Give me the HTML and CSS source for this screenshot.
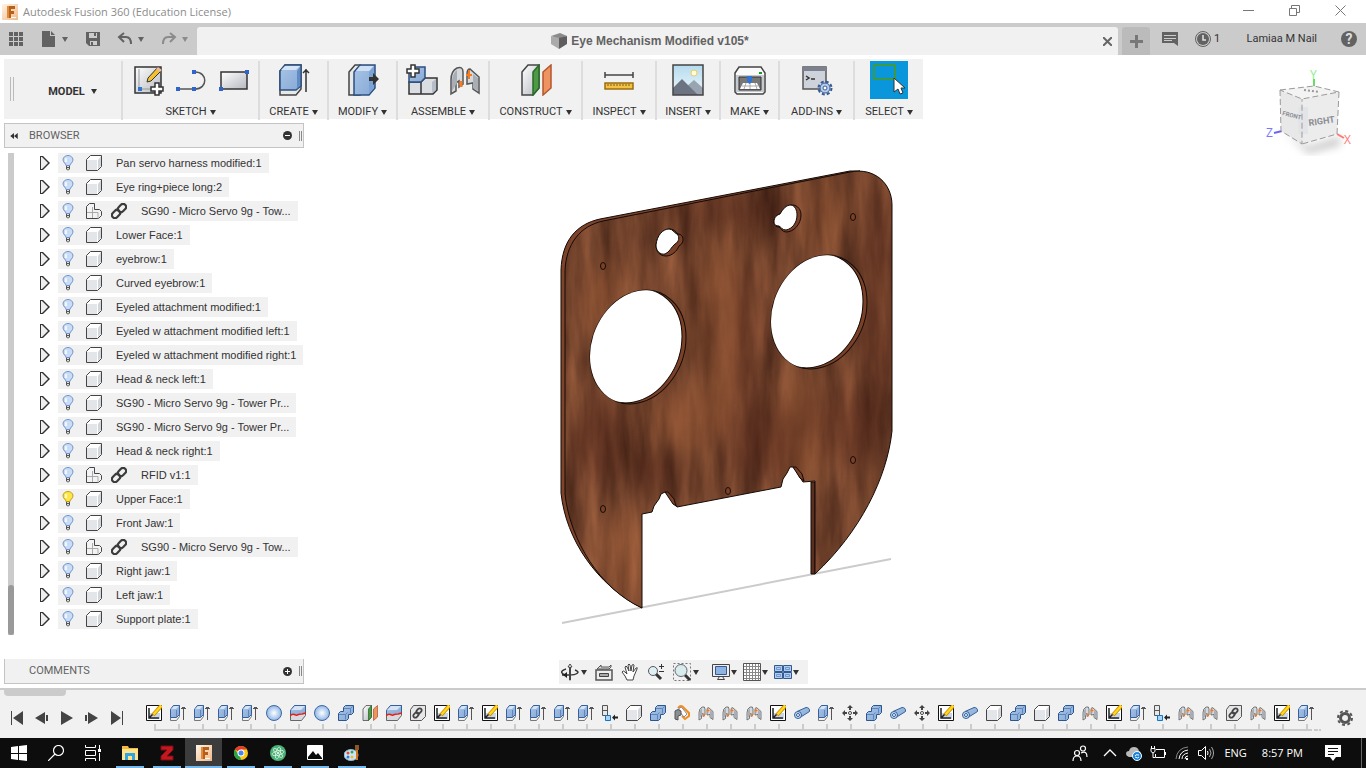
FILE: index.html
```html
<!DOCTYPE html>
<html lang="en">
<head>
<meta charset="UTF-8">
<meta name="viewport" content="width=device-width, initial-scale=1">
<title>Autodesk Fusion 360 (Education License)</title>
<link rel="stylesheet" href="styles.css">
</head>
<body>

<!-- Icon sprite -->
<svg class="sprite" aria-hidden="true">
  <defs>
    <linearGradient id="gBlue" x1="0" y1="0" x2="1" y2="1"><stop offset="0" stop-color="#a9c4e6"/><stop offset="1" stop-color="#86a9d6"/></linearGradient>
    <linearGradient id="gGrey" x1="0" y1="0" x2="1" y2="1"><stop offset="0" stop-color="#fff"/><stop offset="1" stop-color="#b4b8bf"/></linearGradient>
    <linearGradient id="gSky" x1="0" y1="0" x2="0" y2="1"><stop offset="0" stop-color="#b5dbee"/><stop offset="1" stop-color="#eef8fc"/></linearGradient>
    <radialGradient id="gBall"><stop offset="0" stop-color="#fff"/><stop offset="1" stop-color="#8fb6e6"/></radialGradient>
    <linearGradient id="gFusion" x1="0" y1="0" x2="1" y2="1"><stop offset="0" stop-color="#fff3e4"/><stop offset="1" stop-color="#f0b98a"/></linearGradient>
  </defs>

  <symbol id="fusion" viewBox="0 0 16 16"><path fill="url(#gFusion)" d="M0 0h16v16H0z"/><path fill="#b8601b" d="M5 2h8v3H9v2h3v3H9v4H5z"/><path fill="#e08b3c" d="M5 2h2v12H5z"/><path fill="#fff" d="M9 13h5v1H9z"/></symbol>
  <symbol id="apps" viewBox="0 0 16 16"><path fill="#626262" d="M1 1h4v4H1zm5 0h4v4H6zm5 0h4v4h-4zM1 6h4v4H1zm5 0h4v4H6zm5 0h4v4h-4zM1 11h4v4H1zm5 0h4v4H6zm5 0h4v4h-4z"/></symbol>
  <symbol id="doc" viewBox="0 0 16 16"><path fill="#626262" d="M1 0h8v5h5v11H1zM10 0l4 4h-4z"/></symbol>
  <symbol id="save" viewBox="0 0 16 16"><path fill="#626262" d="M1 1h14v14H4l-3-3z"/><path fill="#ccc" d="M4 2h8v5H4zM5 10h7v4H5z"/><path fill="#626262" d="M9 2h2v3H9zM6 11h2v4H6z"/></symbol>
  <symbol id="undo" viewBox="0 0 16 16"><path fill="none" stroke="currentColor" stroke-width="2" d="M7 2L2 6l5 5M2 6h7q5 0 5 7"/></symbol>
  <symbol id="redo" viewBox="0 0 16 16"><path fill="none" stroke="currentColor" stroke-width="2" d="M9 2l5 4-5 5M14 6H7q-5 0-5 7"/></symbol>
  <symbol id="cube" viewBox="0 0 16 16"><path fill="#8b8b8b" d="M0 3l9-3 7 3-8 3z"/><path fill="#aaa" d="M0 3l8 2v11l-8-5z"/><path fill="#5e5e5e" d="M8 5l8-2v8l-8 5z"/></symbol>
  <symbol id="note" viewBox="0 0 16 16"><path fill="#626262" d="M0 1h16v14l-4-3H0z"/><path stroke="#ccc" d="M2 4.500h12M2 7.500h12M2 9.500h8"/></symbol>
  <symbol id="clock" viewBox="0 0 16 16"><circle cx="8" cy="8" r="7.500" fill="none" stroke="#626262"/><circle cx="8" cy="8" r="6" fill="#626262"/><path fill="none" stroke="#e4e4e4" stroke-width="1.500" d="M8 4v5h3"/></symbol>

  <symbol id="newsketch" viewBox="0 0 32 32"><path fill="url(#gGrey)" stroke="#333" stroke-width="1.500" d="M3 3h26v26H3z"/><path fill="none" stroke="#999" d="M7 5v20h20"/><path fill="#2e74d2" d="M6 23h4v4H6z"/><path fill="#f6bf2e" stroke="#333" d="M16 14L26 3l4 3-11 11-4 1z"/><path fill="#eab9a1" d="M26 3l4 3-2 2-4-3z"/><path fill="#fff" stroke="#333" stroke-width="1.500" d="M23 19h4v4h4v4h-4v4h-4v-4h-4v-4h4z"/></symbol>
  <symbol id="spline" viewBox="0 0 32 32"><path fill="none" stroke="#555" stroke-width="1.500" d="M3 25h17c13 0 13-17 0-17"/><path fill="#2e64cc" d="M1 23h4v4H1zm16 0h4v4h-4zm0-17h4v4h-4z"/></symbol>
  <symbol id="rect" viewBox="0 0 32 32"><path fill="url(#gGrey)" stroke="#333" stroke-width="1.500" d="M3 8h26v17H3z"/><path fill="#2e64cc" d="M27 6h4v4h-4zM1 23h4v4H1z"/></symbol>
  <symbol id="extrude" viewBox="0 0 32 32"><path fill="#e8e8e8" stroke="#444" stroke-width="1.500" d="M2 7l5-6h16v24l-5 6H2z"/><path fill="url(#gBlue)" stroke="#2c4f80" stroke-width="1.500" d="M2 7l5-6h16v21l-5 4H2z"/><path fill="#d4e3f5" d="M3 6l4-4h15l-4 4z"/><path fill="#5f8cc5" d="M19 7l3-4v18l-3 4z"/><path fill="none" stroke="#333" stroke-width="1.500" d="M28 28V5M25 9l3-3 3 3"/></symbol>
  <symbol id="presspull" viewBox="0 0 32 32"><path fill="#e9e9e9" stroke="#444" stroke-width="1.500" d="M2 8l6-7h5v30H2z"/><path fill="url(#gBlue)" stroke="#2c4f80" stroke-width="1.500" d="M7 8l6-7h15v23l-6 7H7z"/><path fill="#d0e0f4" d="M9 7l4-5h14l-5 5z"/><path fill="#7ba3d6" d="M22 8l5-6v22l-5 6z"/><path fill="#333" d="M22 13h4v-4l6 6-6 6v-4h-4z"/></symbol>
  <symbol id="component" viewBox="0 0 32 32"><path fill="#dadde2" stroke="#333" stroke-width="1.500" d="M3 18h12v12H3zM15 18l4-4h12v12l-4 4H15z"/><path fill="#b7bdc6" d="M26 18l4-3v11l-4 3z"/><path fill="url(#gBlue)" stroke="#2c4f80" stroke-width="1.500" d="M3 18V7l4-4h12v11l-4 4z"/><path fill="#fff" stroke="#333" stroke-width="1.500" d="M5 1h4v4h4v4H9v4H5V9H1V5h4z"/></symbol>
  <symbol id="joint" viewBox="0 0 32 32"><path fill="#d5d8dc" stroke="#555" stroke-width="1.500" d="M2 16q0-9 6-12 6-2 6 4v12l-4 3v-6l-3 2v8l-5 3z"/><path fill="#a9aeb6" d="M3 16q1-7 5-10v13l-5 8z"/><path fill="#d5d8dc" stroke="#555" stroke-width="1.500" d="M18 10q0-5 3-5l9 8v16l-6-4v-6l-6 1z"/><path fill="#a9aeb6" d="M24 10l5 4v13l-5-3z"/><path stroke="#f47b20" stroke-width="3" d="M12 17v6"/><path stroke="#f47b20" stroke-width="2" d="M20 6v9M17 11h6"/></symbol>
  <symbol id="plane" viewBox="0 0 32 32"><path fill="url(#gGrey)" stroke="#444" stroke-width="1.500" d="M2 8l6-7h11v23l-6 7H2z"/><path fill="#4c9a46" stroke="#2b6a28" stroke-width="1.500" d="M13 8l6-7v23l-6 7z"/><path fill="#ee9461" stroke="#b4562c" stroke-width="1.500" d="M23 8l8-7v23l-8 7z"/></symbol>
  <symbol id="measure" viewBox="0 0 32 32"><path stroke="#444" stroke-width="1.500" d="M2 11h28M2 8v6M30 8v6"/><path fill="#f2c245" stroke="#9b6c10" stroke-width="1.500" d="M2 19h28v6H2z"/><path stroke="#7d5a12" d="M5 20v2m3-2v2m3-2v2m3-2v2m3-2v2m3-2v2m3-2v2m3-2v2"/></symbol>
  <symbol id="insert" viewBox="0 0 32 32"><path fill="url(#gSky)" d="M1 1h30v30H1z"/><circle cx="22" cy="9" r="3" fill="#fffbe0" stroke="#f1ce5a"/><path fill="#9aa3b0" d="M14 23l8-7 9 8v7H14z"/><path fill="#6c7483" d="M1 24l9-9 16 16H1z"/><path fill="none" stroke="#444" stroke-width="1.500" d="M1 1h30v30H1z"/></symbol>
  <symbol id="print" viewBox="0 0 32 32"><path fill="#fafafa" stroke="#444" stroke-width="1.500" d="M1 9l4-6h22l4 6v19l-2 2H3l-2-2z"/><path fill="#c6c9ce" d="M2 11h28v17H2z"/><path fill="#777" stroke="#333" d="M5 13h22v13H5z"/><path fill="#fff" d="M9 19h14l3 6H6z"/><path fill="#2f75d6" d="M13 12h5v5l-2 3h-1l-2-3z"/><path fill="#169b20" d="M25 8h3v2h-3z"/><path stroke="#aaa" d="M8 22h16M12 19l-2 6m6-6v6m5-6l2 6"/></symbol>
  <symbol id="addins" viewBox="0 0 32 32"><path fill="#cdd2db" stroke="#555" stroke-width="1.500" d="M2 3h23v22H2z"/><path fill="#7b8190" d="M2 3h23v4H2z"/><path fill="none" stroke="#333" stroke-width="1.500" d="M5 12l3 2-3 2M10 15h4"/><circle cx="24" cy="24" r="6.500" fill="none" stroke="#385a92" stroke-width="2" stroke-dasharray="3 2.100"/><circle cx="24" cy="24" r="5" fill="#b5ccee" stroke="#385a92"/><circle cx="24" cy="24" r="2" fill="#fff" stroke="#385a92"/></symbol>
  <symbol id="select" viewBox="0 0 38 38"><path fill="#0a96db" d="M0 0h38v38H0z"/><path fill="none" stroke="#4f9c13" stroke-width="1.500" d="M4 4h21v14H4z"/><path fill="#fff" stroke="#333" d="M24 17v14l4-3 2 5 3-1-2-5h4z"/></symbol>

  <symbol id="bulb" viewBox="0 0 16 16"><path fill="#ddd" stroke="#555" d="M6.500 10.500h3v3.500l-1 1h-1l-1-1zM6.500 12.500h3"/><path d="M6 10.500Q6 9 4.500 8C1 4 4.500.500 8 .500S15 4 11.500 8Q10 9 10 10.500z"/><path fill="#fff" stroke="none" opacity=".7" d="M5 3h2v4H5z"/></symbol>
  <symbol id="body" viewBox="0 0 16 16"><path fill="#fff" stroke="#444" d="M.5 4.500l4-4h11v11l-4 4H.5z"/><path fill="#e3e5e9" d="M1 5h10v10H1z"/><path fill="#d2d5da" d="M12 5l3-4v10l-3 3z"/></symbol>
  <symbol id="bodies" viewBox="0 0 16 16"><path fill="#f3f3f5" stroke="#444" d="M.5 3.500l3-3h5v6h5l2 2v4l-3 3H.5z"/><path fill="none" stroke="#aaa" d="M6.500 4v11M1 9.500h11v6"/></symbol>
  <symbol id="link" viewBox="0 0 16 16"><g fill="none" stroke="#3c3c3c" stroke-width="2.200"><rect x="-4.500" y="-3" width="9" height="6" rx="3" transform="translate(11 5) rotate(-45)"/><rect x="-4.500" y="-3" width="9" height="6" rx="3" transform="translate(5 11) rotate(-45)"/></g></symbol>

  <symbol id="t-sketch" viewBox="0 0 16 16"><path fill="#fff" stroke="#111" d="M.5.5h15v15H.5z"/><path fill="#c9d6ea" d="M3 8h11v6H3z"/><path fill="none" stroke="#222" stroke-width="1.500" d="M3 3v10h10M3 13l6-6"/><path stroke="#c88a00" stroke-width="4" d="M7 10l8-9"/><path stroke="#ffd71c" stroke-width="2.500" d="M7.500 9.500l8-9"/></symbol>
  <symbol id="t-ext" viewBox="0 0 16 16"><path fill="#f1f1f1" stroke="#777" d="M.5 4.500l3-4h6v11l-3 4h-6z"/><path fill="url(#gBlue)" stroke="#34609b" d="M.5 4.500l3-4h6v9l-3 3h-6z"/><path fill="#d4e3f5" d="M1 4l3-3h5L6 4z"/><path fill="none" stroke="#5c86bd" d="M6.500 12V5"/><path fill="none" stroke="#555" d="M13.500 15V2M11 3.500h5M12 2.500h3"/></symbol>
  <symbol id="t-ball" viewBox="0 0 16 16"><circle cx="8" cy="8" r="7.500" fill="url(#gBall)" stroke="#3d68a5"/></symbol>
  <symbol id="t-split" viewBox="0 0 16 16"><path fill="#d7dade" stroke="#666" d="M.5 5.500l4-5h11v10l-4 5H.5z"/><path fill="url(#gBlue)" stroke="#34609b" d="M.5 10V5.500l4-5h11V8"/><path fill="#d4e3f5" d="M1 5l4-4h10l-4 4z"/><path fill="none" stroke="#e32214" stroke-width="1.500" d="M0 11c4-4 5 0 7-1s4-1 5-1l4-1"/></symbol>
  <symbol id="t-comb" viewBox="0 0 16 16"><path fill="url(#gBlue)" stroke="#2b5591" d="M.5 8.500l2-2h3v-4l2-2h8v7l-2 2h-3v4l-2 2h-8z"/><path fill="none" stroke="#5c86bd" d="M6 3.500h6.500v5M1 9.500h6.500v5M12.500 3.500l2-2M7.500 9.500l2-2"/></symbol>
  <symbol id="t-link" viewBox="0 0 16 16"><path fill="#e6e6e8" stroke="#555" d="M.5 4.500l3-4h12v11l-4 4H.5z"/><g fill="none" stroke="#444" stroke-width="1.800"><rect x="-3" y="-2" width="6" height="4" rx="2" transform="translate(9 6) rotate(-45)"/><rect x="-3" y="-2" width="6" height="4" rx="2" transform="translate(6 10) rotate(-45)"/></g></symbol>
  <symbol id="t-comp" viewBox="0 0 16 16"><path fill="#e8e8e8" stroke="#555" d="M.5.5h5v10h-5zM.5 5.500h5"/><path fill="#a9d4f5" stroke="#1276c8" d="M3.500 10.500h5v5h-5z"/><path fill="#222" d="M10 12.500l3-3v2h3v2h-3v2z"/></symbol>
  <symbol id="t-asbuilt" viewBox="0 0 16 16"><path fill="none" stroke="#f28c1e" stroke-width="2" d="M4 3q3-4 6 0l5 5v3l-4 3-3-3"/><path fill="#fff" stroke="#888" d="M5 3q3-2 4 1l4 5-3 3-5-6z"/><path fill="#8b8f94" stroke="#555" d="M1 6q3-3 6 0v4l-3 1v4l-3-1z"/></symbol>
  <symbol id="t-pipe" viewBox="0 0 16 16"><path fill="url(#gBlue)" stroke="#34609b" d="M3 6.500l9-4q4 0 3.500 4L6 12.500"/><circle cx="4" cy="10" r="3.500" fill="#c9dcf2" stroke="#34609b"/><circle cx="4" cy="10" r="1.500" fill="#fff" stroke="#34609b"/></symbol>
  <symbol id="t-move" viewBox="0 0 16 16"><path fill="#444" d="M8 0l3 3H9v2H7V3H5zM8 16l-3-3h2v-2h2v2h2zM0 8l3-3v2h2v2H3v2zM16 8l-3 3V9h-2V7h2V5z"/><circle cx="8" cy="8" r="1.500" fill="#fff" stroke="#444"/></symbol>

  <symbol id="orbit" viewBox="0 0 18 18"><path fill="none" stroke="#333" stroke-width="1.500" d="M5 6C-2 8 0 12 8 12s12-3 6-5M1 12h5"/><path fill="#fff" stroke="#444" d="M8.500 17V4H7l2-3 2 3H9.500v13z"/><path fill="#222" d="M2 12l4-3v6z"/></symbol>
  <symbol id="lookat" viewBox="0 0 18 18"><path fill="#eee" stroke="#555" stroke-width="1.500" d="M1 7h16v10H1z"/><path fill="#aaa" stroke="#444" d="M4.500 10.500h9v3h-9z"/><path fill="#ddd" stroke="#555" d="M2 6l4-4v2h8l2-2v2l-2 2z"/></symbol>
  <symbol id="hand" viewBox="0 0 18 18"><path fill="#fff" stroke="#444" d="M6 17l-2-4-3-4q1-2 3 0l2 2L4 4q1-2 2 0l2 4-1-6q1-2 2 0l1 6 1-6q2-1 2 0l-1 7 3-4q2-1 1 1l-3 7-1 4z"/></symbol>
  <symbol id="zoomin" viewBox="0 0 18 18"><path stroke="#333" stroke-width="3" d="M9 11l5 5"/><circle cx="6" cy="8" r="4.500" fill="#dff0f2" stroke="#556"/><path stroke="#333" d="M12 3.500h5M14.500 1v5M12 8.500h5"/></symbol>
  <symbol id="zoomfit" viewBox="0 0 18 18"><path fill="none" stroke="#777" stroke-dasharray="2 2" d="M.5.500h17v17H.5z"/><path stroke="#333" stroke-width="3" d="M12 12l5 5"/><circle cx="8" cy="7.500" r="6" fill="#d8ecec" stroke="#667"/></symbol>
  <symbol id="display" viewBox="0 0 18 18"><path fill="#eee" stroke="#444" d="M.5 1.500h17v12H.5zM5.500 16.500l2-3h3l2 3z"/><path fill="#8eb4e3" stroke="#35588f" d="M3.500 3.500h11v8h-11z"/></symbol>
  <symbol id="gridset" viewBox="0 0 18 18"><path fill="#fff" stroke="#555" d="M.5.500h17v17H.5z"/><path stroke="#888" d="M3.500 1v16m3-16v16m3-16v16m3-16v16m3-16v16M1 3.500h16m-16 3h16m-16 3h16m-16 3h16m-16 3h16"/></symbol>
  <symbol id="views" viewBox="0 0 18 18"><path fill="#aecdf0" stroke="#35588f" d="M.5 2.500h8v6h-8zm9 0h8v6h-8zm-9 7h8v6h-8zm9 0h8v6h-8z"/><path fill="none" stroke="#6f97ca" d="M2.500 4.500h4v2h-4zm9 0h4v2h-4zm-9 7h4v2h-4zm9 0h4v2h-4z"/></symbol>

  <symbol id="gear" viewBox="0 0 16 16"><circle cx="8" cy="8" r="4.500" fill="none" stroke="#555" stroke-width="3"/><circle cx="8" cy="8" r="7" fill="none" stroke="#555" stroke-width="2" stroke-dasharray="3 2.500"/></symbol>
  <symbol id="first" viewBox="0 0 16 16"><path fill="#444" d="M2 1h1v14H2zM14 1v14L4 8z"/></symbol>
  <symbol id="back" viewBox="0 0 16 16"><path fill="#444" d="M11 2v12L1 8zM12 5h2v6h-2z"/></symbol>
  <symbol id="play" viewBox="0 0 16 16"><path fill="#444" d="M2 1l12 7-12 7z"/></symbol>
  <symbol id="fwd" viewBox="0 0 16 16"><path fill="#444" d="M4 2v12l10-6zM1 5h2v6H1z"/></symbol>
  <symbol id="last" viewBox="0 0 16 16"><path fill="#444" d="M13 1h1v14h-1zM2 1v14l10-7z"/></symbol>

  <symbol id="win" viewBox="0 0 16 16"><path fill="#fff" d="M0 2l7-1v7H0zM8 1l8-1v8H8zM0 9h7v6l-7-1zM8 9h8v7l-8-1z"/></symbol>
  <symbol id="search" viewBox="0 0 16 16"><circle cx="10.500" cy="5.500" r="5" fill="none" stroke="#fff" stroke-width="1.200"/><path stroke="#fff" stroke-width="1.200" d="M7 9l-7 7"/></symbol>
  <symbol id="taskview" viewBox="0 0 16 16"><path fill="none" stroke="#fff" d="M.5 0v2.500h10V0M.5 5.500h10v5H.5zM.5 16v-2.500h10V16M14.500 0v4m0 4v8"/><path fill="#fff" d="M13 4h3v3h-3z"/></symbol>
  <symbol id="folder" viewBox="0 0 16 16"><path fill="#f5b93c" d="M0 1h6l1 2h9v4H0z"/><path fill="#ffe38d" d="M0 4h16v11H0z"/><path fill="#2fa5e4" d="M3 8h10v7h-3v-4H6v4H3z"/></symbol>
  <symbol id="zed" viewBox="0 0 16 16"><path fill="#c41820" stroke="#7c0c12" d="M2 1h12v4l-6 6h6v4H2v-4l6-6H2z"/></symbol>
  <symbol id="chrome" viewBox="0 0 16 16"><circle cx="8" cy="8" r="7" fill="#fbc915"/><path fill="#e33b2e" d="M8 8L1.900 4.500A7 7 0 0 1 14 4.500H8z"/><path fill="#2ca24c" d="M1.900 4.500L6 10l2.500 5A7 7 0 0 1 1.900 4.500z"/><circle cx="8" cy="8" r="3.500" fill="#fff"/><circle cx="8" cy="8" r="2.500" fill="#4586f3"/></symbol>
  <symbol id="atom" viewBox="0 0 16 16"><circle cx="8" cy="8" r="8" fill="#49b176"/><g fill="none" stroke="#dff5e7" stroke-width=".8"><ellipse cx="8" cy="8" rx="6" ry="2.200" transform="rotate(-15 8 8)"/><ellipse cx="8" cy="8" rx="6" ry="2.200" transform="rotate(45 8 8)"/><ellipse cx="8" cy="8" rx="6" ry="2.200" transform="rotate(105 8 8)"/></g><circle cx="8" cy="8" r="1" fill="#fff"/></symbol>
  <symbol id="photos" viewBox="0 0 16 16"><path fill="#0b0b0b" stroke="#fff" d="M.5.500h15v14H.5z"/><path fill="#fff" d="M1 1h14v12l-4-5-2 2-3-4-5 6z"/></symbol>
  <symbol id="paint" viewBox="0 0 16 16"><ellipse cx="7" cy="10" rx="7" ry="5.500" fill="#cfe4f3" stroke="#8db4cf"/><circle cx="4" cy="8" r="1.500" fill="#e34a33"/><circle cx="8" cy="7" r="1.500" fill="#35a853"/><circle cx="4" cy="12" r="1.500" fill="#2f78dc"/><circle cx="8" cy="12" r="1.500" fill="#f0bd28"/><path stroke="#d1751f" stroke-width="2" d="M13 15V4"/><path fill="#8a5527" d="M11 0h4v5h-4z"/></symbol>
  <symbol id="people" viewBox="0 0 16 16"><g fill="none" stroke="#fff" stroke-width="1.200"><circle cx="5" cy="8" r="2.500"/><path d="M1 16q0-5 4-5t4 5"/><circle cx="11" cy="3.500" r="2.500"/><path d="M9 8q6-3 6 4"/></g></symbol>
  <symbol id="chev" viewBox="0 0 16 16"><path fill="none" stroke="#fff" stroke-width="1.300" d="M2 11l6-6 6 6"/></symbol>
  <symbol id="cloud" viewBox="0 0 16 16"><path fill="#b9b9b9" d="M3 12q-3-1-3-3 0-3 3-3 1-4 5-4t5 4q3 1 2 6z"/><circle cx="11" cy="11" r="4.500" fill="#1684dc" stroke="#fff"/><path fill="none" stroke="#fff" d="M9 11q0-2 4-1M13 12q-1 2-4 0"/></symbol>
  <symbol id="battery" viewBox="0 0 16 16"><path fill="none" stroke="#fff" d="M6 4.500h8.500v8H5.500V9M15.500 7v3M1 3.500h4v3q-2 3-4 0zM1.500 1v2m3-2v2M3 8v4.500h2"/></symbol>
  <symbol id="wifi" viewBox="0 0 16 16"><g fill="none" stroke="#fff"><path stroke="#888" d="M2 14Q3 3 14 2"/><path d="M5 14Q6 6 14 5M8 14q0-5 6-6M11 14q0-3 3-3"/></g><path fill="#fff" d="M12 13h2v2h-2z"/></symbol>
  <symbol id="volume" viewBox="0 0 16 16"><path fill="none" stroke="#fff" d="M.5 5.500h3l4-4v13l-4-4h-3zM9.500 6q1 2 0 4"/><path fill="none" stroke="#aaa" d="M11.500 4q3 4 0 8M13.500 2q4 6 0 12"/></symbol>
  <symbol id="action" viewBox="0 0 16 16"><path fill="#fff" d="M0 0h16v12h-5l-3 4-3-4H0z"/><path stroke="#111" d="M3 3.500h10M3 6.500h10M3 9.500h6"/></symbol>
</svg>

<header class="titlebar">
  <svg class="i16"><use href="#fusion"/></svg>
  <h1>Autodesk Fusion 360 (Education License)</h1>
  <div class="window-controls">
    <button type="button" aria-label="Minimize"><svg viewBox="0 0 11 11"><path d="M0 5.500h11"/></svg></button>
    <button type="button" aria-label="Restore"><svg viewBox="0 0 11 11"><path d="M.5 3.500h7v7h-7zM2.500 3V.500h8v7H8"/></svg></button>
    <button type="button" aria-label="Close"><svg viewBox="0 0 11 11"><path d="M.5.500l10 10M10.500.500l-10 10"/></svg></button>
  </div>
</header>

<div class="appbar">
  <div class="quick">
    <button type="button" aria-label="Data panel"><svg class="i16"><use href="#apps"/></svg></button>
    <button type="button" aria-label="File"><svg class="i16"><use href="#doc"/></svg><span class="caret"></span></button>
    <button type="button" aria-label="Save"><svg class="i16"><use href="#save"/></svg></button>
    <button type="button" aria-label="Undo"><svg class="i16"><use href="#undo"/></svg><span class="caret"></span></button>
    <button type="button" aria-label="Redo" class="faded"><svg class="i16"><use href="#redo"/></svg><span class="caret"></span></button>
  </div>
  <div class="doc-tab">
    <span class="doc-name"><svg class="i16"><use href="#cube"/></svg>Eye Mechanism Modified v105*</span>
    <button type="button" class="tab-close" aria-label="Close tab"><svg viewBox="0 0 9 9"><path d="M0 0l9 9M9 0L0 9"/></svg></button>
  </div>
  <button type="button" class="new-tab" aria-label="New design"></button>
  <div class="account">
    <button type="button" aria-label="Comments"><svg class="i16"><use href="#note"/></svg></button>
    <button type="button" class="jobs"><svg class="i16"><use href="#clock"/></svg>1</button>
    <button type="button" class="user">Lamiaa M Nail</button>
    <button type="button" class="help" aria-label="Help">?</button>
  </div>
</div>

<main class="workspace">
  <svg class="scene" viewBox="0 55 1366 633" role="img" aria-label="Upper face plate">
    <defs>
      <filter id="grain" x="0" y="0" width="1" height="1" color-interpolation-filters="sRGB">
        <feTurbulence type="fractalNoise" baseFrequency=".05 .008" numOctaves="4" seed="7"/>
        <feColorMatrix values=".45 0 0 0 .22  .3 0 0 0 .11  .2 0 0 0 .07  0 0 0 0 1"/>
      </filter>
      <filter id="soft" x="-50%" y="-50%" width="200%" height="200%" color-interpolation-filters="sRGB"><feGaussianBlur stdDeviation="12"/></filter>
      <path id="plate" d="M565 494V271C566 244 580 226 603 221L850 172C875 167 892 184 892 205V431C887 478 860 532 815 574V481L803 482L799 476L797 472L793 467H790L787 473L783 479L781 487L677 507L673 502L669 496L665 492L661 494L659 499L654 506L652 512L642 514V608C600 589 570 540 565 494Z"/>
      <clipPath id="plateClip"><use href="#plate"/></clipPath>
      <ellipse id="eye" rx="48" ry="56" transform="matrix(1 -.2 0 1 0 0)"/>
      <clipPath id="eyeClip"><use href="#eye"/></clipPath>
    </defs>
    <path d="M562 623L891 559" stroke="#cbcbcb" stroke-width="2"/>
    <!-- plate side -->
    <path fill="#7d432b" stroke="#140a06" d="M561 493V270C562 240 577 224 600 219L850 171H860L650 230L570 300V490L642 608C597 585 566 540 561 493Z"/>
    <path fill="#5c2e20" stroke="#140a06" d="M811 482h4v92h-4z"/>
    <g clip-path="url(#plateClip)">
      <path fill="#74402a" filter="url(#grain)" d="M555 165h340v445H555z"/>
      <g filter="url(#soft)">
        <g fill="#a8613a" opacity=".4"><ellipse cx="720" cy="330" rx="22" ry="90"/><ellipse cx="605" cy="305" rx="18" ry="40"/><ellipse cx="690" cy="420" rx="40" ry="30"/><ellipse cx="800" cy="430" rx="22" ry="60"/><ellipse cx="625" cy="560" rx="18" ry="50"/><ellipse cx="825" cy="215" rx="16" ry="40"/></g>
        <g fill="#4a1f15" opacity=".4"><ellipse cx="600" cy="440" rx="28" ry="40"/><ellipse cx="745" cy="340" rx="12" ry="70"/><ellipse cx="760" cy="440" rx="36" ry="40"/><ellipse cx="880" cy="300" rx="16" ry="120"/><ellipse cx="730" cy="210" rx="60" ry="14"/><ellipse cx="850" cy="430" rx="32" ry="36"/><ellipse cx="655" cy="470" rx="24" ry="20"/></g>
      </g>
    </g>
    <use href="#plate" fill="none" stroke="#140a06"/>
    <g fill="#7a4128" stroke="#140a06">
      <g transform="translate(638 347)"><use href="#eye"/><g clip-path="url(#eyeClip)"><use href="#eye" x="-4" y="-1" fill="#fff"/></g></g>
      <g transform="translate(819 312)"><use href="#eye"/><g clip-path="url(#eyeClip)"><use href="#eye" x="-4" y="-1" fill="#fff"/></g></g>
      <path d="M656 245c1-10 7-16 14-16 4 0 6 3 8 5 6 0 7 9 1 12-2 5-7 10-13 10-6 0-10-4-10-11z"/>
      <path fill="#fff" d="M656 245c1-10 7-16 13-16 4 0 5 4 8 5 3 3 2 8-2 10-4 3-5 8-10 10-5 1-9-3-9-9z"/>
      <path d="M774 222c0-5 3-7 6-8 3-5 7-9 12-9 6 0 9 5 9 10 0 9-7 17-15 17-4 0-5-4-7-5-3 0-5-2-5-5z"/>
      <path fill="#fff" d="M774 222c0-5 3-7 6-8 3-5 6-9 11-9 4 1 6 5 6 10 0 8-5 14-11 15-4 0-5-3-7-4-3 0-5-1-5-4z"/>
      <ellipse cx="603" cy="266" rx="2.500" ry="3.500"/><ellipse cx="853" cy="217" rx="2.500" ry="3.500"/><ellipse cx="853" cy="460" rx="2.500" ry="3.500"/><ellipse cx="603" cy="509" rx="2.500" ry="3.500"/><ellipse cx="728" cy="491" rx="2.500" ry="3.500"/>
      <path d="M665 492h3l6 7 2 7-3-2zM793 467h3l6 7 2 7-4-3z"/>
    </g>
  </svg>

  <svg class="viewcube" viewBox="0 0 96 96" role="img" aria-label="View cube">
    <defs><filter id="shade"><feGaussianBlur stdDeviation="4"/></filter></defs>
    <path fill="#999" opacity=".6" filter="url(#shade)" d="M22 66l24 16 32-10v8L46 88z"/>
    <path stroke="#6d6" stroke-width="2" d="M52 14v8"/>
    <path stroke="#66f" stroke-width="2" d="M12 68l8-2"/>
    <path stroke="#f77" stroke-width="2" d="M75 69l7 4"/>
    <path fill="#f3f3f3" d="M18 25l34-4 25 6-37 7z"/>
    <path fill="#e8e8e9" d="M18 25l22 9v45L19 66z"/>
    <path fill="#ececed" d="M40 34l37-7-2 42-35 10z"/>
    <path fill="#e2e4e7" d="M36 42l10 0v27h-10z"/>
    <path fill="none" stroke="#9a9a9a" stroke-dasharray="6 3" d="M18 25l34-4 25 6-37 7zM18 25l1 41 21 13V34M77 27l-2 42-35 10"/>
    <path stroke="#999" stroke-width="2" stroke-dasharray="2 2" d="M42 25l15 2"/>
    <text class="axis" x="48" y="14" fill="#8e8">Y</text>
    <text class="axis" x="4" y="72" fill="#77f">Z</text>
    <text class="axis" x="82" y="79" fill="#f77">X</text>
    <text class="face" x="47" y="61" transform="rotate(-8 47 61)">RIGHT</text>
    <text class="face small" x="20" y="50" transform="rotate(14 20 50)">FRONT</text>
  </svg>

  <div class="ribbon">
    <div class="grip"></div>
    <button type="button" class="mode">MODEL<span class="caret"></span></button>
    <div class="group"><div class="icons"><svg><use href="#newsketch"/></svg><svg><use href="#spline"/></svg><svg><use href="#rect"/></svg></div><button type="button">SKETCH<span class="caret"></span></button></div>
    <div class="group"><div class="icons"><svg><use href="#extrude"/></svg></div><button type="button">CREATE<span class="caret"></span></button></div>
    <div class="group"><div class="icons"><svg><use href="#presspull"/></svg></div><button type="button">MODIFY<span class="caret"></span></button></div>
    <div class="group"><div class="icons"><svg><use href="#component"/></svg><svg><use href="#joint"/></svg></div><button type="button">ASSEMBLE<span class="caret"></span></button></div>
    <div class="group"><div class="icons"><svg><use href="#plane"/></svg></div><button type="button">CONSTRUCT<span class="caret"></span></button></div>
    <div class="group"><div class="icons"><svg><use href="#measure"/></svg></div><button type="button">INSPECT<span class="caret"></span></button></div>
    <div class="group"><div class="icons"><svg><use href="#insert"/></svg></div><button type="button">INSERT<span class="caret"></span></button></div>
    <div class="group"><div class="icons"><svg><use href="#print"/></svg></div><button type="button">MAKE<span class="caret"></span></button></div>
    <div class="group"><div class="icons"><svg><use href="#addins"/></svg></div><button type="button">ADD-INS<span class="caret"></span></button></div>
    <div class="group"><div class="icons"><svg class="active"><use href="#select"/></svg></div><button type="button">SELECT<span class="caret"></span></button></div>
  </div>

  <div class="panel browser-head">
    <svg class="collapse" viewBox="0 0 10 8"><path d="M5 0v8L0 4zM10 0v8L5 4z"/></svg>
    <h2>BROWSER</h2>
    <button type="button" class="dot" aria-label="Collapse browser"></button>
    <span class="handle"></span>
  </div>

  <div class="browser">
    <div class="track"><div class="thumb"></div></div>
    <ul class="tree">
      <li><button type="button" class="twist" aria-label="Expand"></button><span class="node"><svg class="i16 bulb"><use href="#bulb"/></svg><svg class="i16"><use href="#body"/></svg><span class="name">Pan servo harness modified:1</span></span></li>
      <li><button type="button" class="twist" aria-label="Expand"></button><span class="node"><svg class="i16 bulb"><use href="#bulb"/></svg><svg class="i16"><use href="#body"/></svg><span class="name">Eye ring+piece long:2</span></span></li>
      <li><button type="button" class="twist" aria-label="Expand"></button><span class="node"><svg class="i16 bulb"><use href="#bulb"/></svg><svg class="i16"><use href="#bodies"/></svg><svg class="i16 chain"><use href="#link"/></svg><span class="name">SG90 - Micro Servo 9g - Tow...</span></span></li>
      <li><button type="button" class="twist" aria-label="Expand"></button><span class="node"><svg class="i16 bulb"><use href="#bulb"/></svg><svg class="i16"><use href="#body"/></svg><span class="name">Lower Face:1</span></span></li>
      <li><button type="button" class="twist" aria-label="Expand"></button><span class="node"><svg class="i16 bulb"><use href="#bulb"/></svg><svg class="i16"><use href="#body"/></svg><span class="name">eyebrow:1</span></span></li>
      <li><button type="button" class="twist" aria-label="Expand"></button><span class="node"><svg class="i16 bulb"><use href="#bulb"/></svg><svg class="i16"><use href="#body"/></svg><span class="name">Curved eyebrow:1</span></span></li>
      <li><button type="button" class="twist" aria-label="Expand"></button><span class="node"><svg class="i16 bulb"><use href="#bulb"/></svg><svg class="i16"><use href="#body"/></svg><span class="name">Eyeled attachment modified:1</span></span></li>
      <li><button type="button" class="twist" aria-label="Expand"></button><span class="node"><svg class="i16 bulb"><use href="#bulb"/></svg><svg class="i16"><use href="#body"/></svg><span class="name">Eyeled w attachment modified left:1</span></span></li>
      <li><button type="button" class="twist" aria-label="Expand"></button><span class="node"><svg class="i16 bulb"><use href="#bulb"/></svg><svg class="i16"><use href="#body"/></svg><span class="name">Eyeled w attachment modified right:1</span></span></li>
      <li><button type="button" class="twist" aria-label="Expand"></button><span class="node"><svg class="i16 bulb"><use href="#bulb"/></svg><svg class="i16"><use href="#body"/></svg><span class="name">Head &amp; neck left:1</span></span></li>
      <li><button type="button" class="twist" aria-label="Expand"></button><span class="node"><svg class="i16 bulb"><use href="#bulb"/></svg><svg class="i16"><use href="#body"/></svg><span class="name">SG90 - Micro Servo 9g - Tower Pr...</span></span></li>
      <li><button type="button" class="twist" aria-label="Expand"></button><span class="node"><svg class="i16 bulb"><use href="#bulb"/></svg><svg class="i16"><use href="#body"/></svg><span class="name">SG90 - Micro Servo 9g - Tower Pr...</span></span></li>
      <li><button type="button" class="twist" aria-label="Expand"></button><span class="node"><svg class="i16 bulb"><use href="#bulb"/></svg><svg class="i16"><use href="#body"/></svg><span class="name">Head &amp; neck right:1</span></span></li>
      <li><button type="button" class="twist" aria-label="Expand"></button><span class="node"><svg class="i16 bulb"><use href="#bulb"/></svg><svg class="i16"><use href="#bodies"/></svg><svg class="i16 chain"><use href="#link"/></svg><span class="name">RFID v1:1</span></span></li>
      <li><button type="button" class="twist" aria-label="Expand"></button><span class="node"><svg class="i16 bulb on"><use href="#bulb"/></svg><svg class="i16"><use href="#body"/></svg><span class="name">Upper Face:1</span></span></li>
      <li><button type="button" class="twist" aria-label="Expand"></button><span class="node"><svg class="i16 bulb"><use href="#bulb"/></svg><svg class="i16"><use href="#body"/></svg><span class="name">Front Jaw:1</span></span></li>
      <li><button type="button" class="twist" aria-label="Expand"></button><span class="node"><svg class="i16 bulb"><use href="#bulb"/></svg><svg class="i16"><use href="#bodies"/></svg><svg class="i16 chain"><use href="#link"/></svg><span class="name">SG90 - Micro Servo 9g - Tow...</span></span></li>
      <li><button type="button" class="twist" aria-label="Expand"></button><span class="node"><svg class="i16 bulb"><use href="#bulb"/></svg><svg class="i16"><use href="#body"/></svg><span class="name">Right jaw:1</span></span></li>
      <li><button type="button" class="twist" aria-label="Expand"></button><span class="node"><svg class="i16 bulb"><use href="#bulb"/></svg><svg class="i16"><use href="#body"/></svg><span class="name">Left jaw:1</span></span></li>
      <li><button type="button" class="twist" aria-label="Expand"></button><span class="node"><svg class="i16 bulb"><use href="#bulb"/></svg><svg class="i16"><use href="#body"/></svg><span class="name">Support plate:1</span></span></li>
    </ul>
  </div>

  <div class="bottom">
    <div class="panel comments">
      <h2>COMMENTS</h2>
      <button type="button" class="dot plus" aria-label="Expand comments"></button>
      <span class="handle"></span>
    </div>
    <div class="navbar">
      <div class="nav-set">
        <button type="button" aria-label="Orbit"><svg><use href="#orbit"/></svg><span class="caret"></span></button>
        <button type="button" aria-label="Look at"><svg><use href="#lookat"/></svg></button>
        <button type="button" aria-label="Pan"><svg><use href="#hand"/></svg></button>
        <button type="button" aria-label="Zoom"><svg><use href="#zoomin"/></svg></button>
        <button type="button" aria-label="Fit"><svg><use href="#zoomfit"/></svg><span class="caret"></span></button>
      </div>
      <div class="nav-set tight">
        <button type="button" aria-label="Display settings"><svg><use href="#display"/></svg><span class="caret"></span></button>
        <button type="button" aria-label="Grid and snaps"><svg><use href="#gridset"/></svg><span class="caret"></span></button>
        <button type="button" aria-label="Viewports"><svg><use href="#views"/></svg><span class="caret"></span></button>
      </div>
    </div>
  </div>
</main>

<section class="timeline" aria-label="Timeline">
  <div class="timeline-scroll"></div>
  <div class="timeline-row">
    <div class="transport">
      <button type="button" aria-label="Go to start"><svg class="i16"><use href="#first"/></svg></button>
      <button type="button" aria-label="Step back"><svg class="i16"><use href="#back"/></svg></button>
      <button type="button" aria-label="Play"><svg class="i16"><use href="#play"/></svg></button>
      <button type="button" aria-label="Step forward"><svg class="i16"><use href="#fwd"/></svg></button>
      <button type="button" aria-label="Go to end"><svg class="i16"><use href="#last"/></svg></button>
    </div>
    <ol class="history">
      <li><svg class="i16"><use href="#t-sketch"/></svg></li>
      <li><svg class="i16"><use href="#t-ext"/></svg></li>
      <li><svg class="i16"><use href="#t-ext"/></svg></li>
      <li><svg class="i16"><use href="#t-ext"/></svg></li>
      <li><svg class="i16"><use href="#t-ext"/></svg></li>
      <li><svg class="i16"><use href="#t-ball"/></svg></li>
      <li><svg class="i16"><use href="#t-split"/></svg></li>
      <li><svg class="i16"><use href="#t-ball"/></svg></li>
      <li><svg class="i16"><use href="#t-comb"/></svg></li>
      <li><svg class="i16"><use href="#plane"/></svg></li>
      <li><svg class="i16"><use href="#t-split"/></svg></li>
      <li><svg class="i16"><use href="#t-link"/></svg></li>
      <li><svg class="i16"><use href="#t-sketch"/></svg></li>
      <li><svg class="i16"><use href="#t-ext"/></svg></li>
      <li><svg class="i16"><use href="#t-sketch"/></svg></li>
      <li><svg class="i16"><use href="#t-ext"/></svg></li>
      <li><svg class="i16"><use href="#t-ext"/></svg></li>
      <li><svg class="i16"><use href="#t-ext"/></svg></li>
      <li><svg class="i16"><use href="#t-ext"/></svg></li>
      <li><svg class="i16"><use href="#t-comp"/></svg></li>
      <li><svg class="i16"><use href="#body"/></svg></li>
      <li><svg class="i16"><use href="#t-comb"/></svg></li>
      <li><svg class="i16"><use href="#t-asbuilt"/></svg></li>
      <li><svg class="i16"><use href="#joint"/></svg></li>
      <li><svg class="i16"><use href="#joint"/></svg></li>
      <li><svg class="i16"><use href="#joint"/></svg></li>
      <li><svg class="i16"><use href="#t-sketch"/></svg></li>
      <li><svg class="i16"><use href="#t-pipe"/></svg></li>
      <li><svg class="i16"><use href="#t-ext"/></svg></li>
      <li><svg class="i16"><use href="#t-move"/></svg></li>
      <li><svg class="i16"><use href="#t-comb"/></svg></li>
      <li><svg class="i16"><use href="#t-pipe"/></svg></li>
      <li><svg class="i16"><use href="#t-move"/></svg></li>
      <li><svg class="i16"><use href="#t-sketch"/></svg></li>
      <li><svg class="i16"><use href="#t-pipe"/></svg></li>
      <li><svg class="i16"><use href="#body"/></svg></li>
      <li><svg class="i16"><use href="#t-comb"/></svg></li>
      <li><svg class="i16"><use href="#body"/></svg></li>
      <li><svg class="i16"><use href="#t-comb"/></svg></li>
      <li><svg class="i16"><use href="#joint"/></svg></li>
      <li><svg class="i16"><use href="#t-sketch"/></svg></li>
      <li><svg class="i16"><use href="#t-ext"/></svg></li>
      <li><svg class="i16"><use href="#t-comp"/></svg></li>
      <li><svg class="i16"><use href="#joint"/></svg></li>
      <li><svg class="i16"><use href="#joint"/></svg></li>
      <li><svg class="i16"><use href="#t-link"/></svg></li>
      <li><svg class="i16"><use href="#joint"/></svg></li>
      <li><svg class="i16"><use href="#t-sketch"/></svg></li>
      <li><svg class="i16"><use href="#t-ext"/></svg></li>
    </ol>
    <button type="button" class="timeline-gear" aria-label="Timeline settings"><svg class="i16"><use href="#gear"/></svg></button>
  </div>
</section>

<footer class="taskbar">
  <div class="tasks">
    <button type="button" aria-label="Start"><svg class="i16"><use href="#win"/></svg></button>
    <button type="button" aria-label="Search"><svg class="i16"><use href="#search"/></svg></button>
    <button type="button" aria-label="Task view"><svg class="i16"><use href="#taskview"/></svg></button>
    <button type="button" class="open" aria-label="File Explorer"><svg class="i16"><use href="#folder"/></svg></button>
    <button type="button" class="open" aria-label="Zotero"><svg class="i16"><use href="#zed"/></svg></button>
    <button type="button" class="open current" aria-label="Fusion 360"><svg class="i16"><use href="#fusion"/></svg></button>
    <button type="button" class="open" aria-label="Chrome"><svg class="i16"><use href="#chrome"/></svg></button>
    <button type="button" class="open" aria-label="Atom"><svg class="i16"><use href="#atom"/></svg></button>
    <button type="button" class="open" aria-label="Photos"><svg class="i16"><use href="#photos"/></svg></button>
    <button type="button" class="open" aria-label="Paint"><svg class="i16"><use href="#paint"/></svg></button>
  </div>
  <div class="tray">
    <svg class="i16 people"><use href="#people"/></svg>
    <svg class="i16"><use href="#chev"/></svg>
    <svg class="i16"><use href="#cloud"/></svg>
    <svg class="i16"><use href="#battery"/></svg>
    <svg class="i16"><use href="#wifi"/></svg>
    <svg class="i16"><use href="#volume"/></svg>
    <span>ENG</span>
    <time class="time">8:57 PM</time>
    <svg class="i16 action"><use href="#action"/></svg>
  </div>
</footer>

</body>
</html>
```
FILE: styles.css
```css
* {
  box-sizing: border-box;
}

body {
  margin: 0;
  height: 100vh;
  display: flex;
  flex-direction: column;
  overflow: hidden;
  background: #fff;
  color: #333;
  font-family: Roboto, Arial, sans-serif;
  font-size: 11px;
  line-height: 16px;
}

h1, h2, ul, ol {
  margin: 0;
  padding: 0;
  font-size: inherit;
  font-weight: normal;
  list-style: none;
}

button {
  display: flex;
  align-items: center;
  margin: 0;
  padding: 0;
  border: 0;
  background: none;
  color: inherit;
  font: inherit;
}

svg {
  display: block;
  flex: none;
}

.sprite {
  position: absolute;
  width: 0;
  height: 0;
}

.i16 {
  width: 16px;
  height: 16px;
}

.caret {
  flex: none;
  border: 3px solid transparent;
  border-top: 5px solid #333;
  border-bottom: 0;
}

/* Window title */
.titlebar {
  flex: none;
  display: flex;
  align-items: center;
  height: 23px;
  padding-left: 2px;
  gap: 5px;
  color: #8c8c8c;
  font-family: "Open Sans", "Segoe UI", sans-serif;
}

.window-controls {
  display: flex;
  gap: 35px;
  margin-left: auto;
  padding: 0 20px 3px 0;
}

.window-controls svg {
  width: 11px;
  height: 11px;
  fill: none;
  stroke: #777;
}

/* Document bar */
.appbar {
  flex: none;
  display: flex;
  height: 32px;
  background: #cbcbcb;
}

.quick {
  display: flex;
  align-items: center;
  justify-content: space-between;
  width: 197px;
  padding: 0 9px 0 8px;
  color: #626262;
}

.quick button {
  gap: 5px;
}

.quick .caret {
  border-top-color: #626262;
}

.faded {
  opacity: 0.6;
}

.doc-tab {
  flex: 1;
  display: flex;
  align-items: center;
  margin-top: 4px;
  padding-right: 6px;
  background: #f1f1f1;
  border-radius: 3px 3px 0 0;
}

.doc-name {
  flex: 1;
  display: flex;
  justify-content: center;
  gap: 4px;
  color: #626262;
  font: bold 12px/16px "Liberation Sans", Arial, sans-serif;
}

.tab-close svg {
  width: 9px;
  height: 9px;
  fill: none;
  stroke: #666;
  stroke-width: 2;
}

.new-tab {
  justify-content: center;
  width: 28px;
  margin: 4px 0 0 4px;
  background: #bbb;
  border-radius: 3px 3px 0 0;
}

.new-tab::before {
  content: "";
  width: 13px;
  height: 13px;
  background:
    linear-gradient(#777, #777) center / 13px 3px no-repeat,
    linear-gradient(#777, #777) center / 3px 13px no-repeat;
}

.account {
  display: flex;
  align-items: center;
  width: 216px;
  padding: 0 9px 0 12px;
}

.jobs {
  gap: 3px;
  margin-left: 17px;
}

.user {
  margin: 0 24px 0 auto;
}

.help {
  justify-content: center;
  width: 16px;
  height: 16px;
  border-radius: 50%;
  background: #626262;
  color: #ddd;
  font-size: 14px;
  font-weight: bold;
}

/* Workspace */
.workspace {
  flex: 1;
  min-height: 0;
  display: flex;
  flex-direction: column;
  position: relative;
  padding: 4px;
}

.scene {
  position: absolute;
  top: 0;
  left: 0;
  width: 100%;
  height: 100%;
}

.viewcube {
  position: absolute;
  top: 10px;
  right: 8px;
  width: 96px;
  height: 96px;
}

.axis {
  font: 12px "Open Sans", sans-serif;
}

.face {
  fill: #8a8d92;
  font: bold 9px Roboto, sans-serif;
}

.face.small {
  font-size: 6px;
}

.browser-head,
.browser,
.ribbon,
.bottom {
  position: relative;
}

/* Ribbon */
.ribbon {
  flex: none;
  align-self: flex-start;
  display: grid;
  grid-template-columns: 10px 107px 137px 69px 69px 92px 93px 74px 64px 59px 75px 70px;
  height: 60px;
  background: #f1f1f1;
}

.grip {
  height: 24px;
  margin: 18px 0 0 6px;
  border: solid #bbb;
  border-width: 0 1px;
}

.mode {
  justify-content: center;
  gap: 6px;
  padding: 2px 0 0 10px;
  font-weight: bold;
}

.group {
  display: flex;
  flex-direction: column;
  align-items: center;
  margin: 2px 0;
  border-left: 2px solid #ddd;
}

.group button {
  gap: 3px;
  height: 16px;
  margin-top: 5px;
}

.icons {
  flex: none;
  display: flex;
  align-items: center;
  gap: 11px;
  height: 38px;
}

.icons svg {
  width: 32px;
  height: 32px;
}

.icons .active {
  width: 38px;
  height: 38px;
}

/* Browser and comments panels */
.panel {
  flex: none;
  display: flex;
  align-items: center;
  width: 300px;
  height: 25px;
  padding: 0 1px 0 4px;
  border: 1px solid #c4c4c4;
  background: #f1f1f1;
  color: #626262;
}

.browser-head {
  margin-top: 4px;
}

.collapse {
  width: 10px;
  height: 6px;
  fill: #333;
}

.panel h2 {
  flex: 1;
  margin-left: 10px;
}

.comments {
  border-top: 0;
}

.panel.comments h2 {
  margin-left: 20px;
}

.dot {
  justify-content: center;
  width: 9px;
  height: 9px;
  border-radius: 50%;
  background:
    linear-gradient(#fff, #fff) center / 5px 1px no-repeat,
    #333;
}

.dot.plus {
  background:
    linear-gradient(#fff, #fff) center / 5px 1px no-repeat,
    linear-gradient(#fff, #fff) center / 1px 5px no-repeat,
    #333;
}

.handle {
  width: 3px;
  height: 10px;
  margin-left: 7px;
  border: solid #888;
  border-width: 0 1px;
}

.browser {
  flex: 1;
  min-height: 0;
  display: flex;
  align-items: flex-start;
  padding: 5px 0 0 4px;
}

.track {
  align-self: stretch;
  display: flex;
  align-items: flex-end;
  width: 6px;
  margin-bottom: 24px;
  background: #cbcbcb;
}

.thumb {
  width: 6px;
  height: 50px;
  border-radius: 3px;
  background: #999;
}

.tree {
  display: flex;
  flex-direction: column;
  gap: 4px;
  padding-left: 26px;
  font-family: "Liberation Sans", Arial, sans-serif;
}

.tree li {
  display: flex;
  align-items: center;
  gap: 8px;
  height: 20px;
}

.twist {
  width: 10px;
  height: 14px;
  background: #333;
  clip-path: polygon(0 0, 3px 0, 100% 50%, 3px 100%, 0 100%);
}

.twist::before {
  content: "";
  width: 100%;
  height: 100%;
  background: #eee;
  clip-path: polygon(1px 1px, 2px 1px, 8px 50%, 2px 13px, 1px 13px);
}

.node {
  display: flex;
  align-items: center;
  height: 20px;
  padding: 0 7px 0 2px;
  background: #f1f1f1;
}

.bulb {
  margin-right: 10px;
  fill: #c9dcf8;
  stroke: #6f90c8;
}

.bulb.on {
  fill: #ffe645;
  stroke: #b99a1c;
}

.chain {
  margin-left: 9px;
}

.name {
  margin-left: 14px;
  white-space: nowrap;
}

/* Comments + navigation bar */
.bottom {
  flex: none;
  display: grid;
  grid-template-columns: 1fr auto 1fr;
  align-items: end;
}

.navbar {
  display: flex;
  gap: 13px;
  height: 24px;
  padding: 0 9px 0 2px;
  background: #f1f1f1;
}

.nav-set {
  display: flex;
  gap: 8px;
}

.nav-set.tight {
  gap: 6px;
}

.nav-set button {
  gap: 2px;
}

.nav-set.tight button {
  gap: 1px;
}

.nav-set svg {
  width: 18px;
  height: 18px;
}

/* Timeline */
.timeline {
  flex: none;
  height: 50px;
  border-top: 2px solid #cbcbcb;
  background: #f1f1f1;
}

.timeline-scroll {
  width: 62px;
  height: 6px;
  margin-left: 4px;
  border-radius: 0 0 4px 4px;
  background: #cbcbcb;
}

.timeline-row {
  display: flex;
  padding: 9px 13px 0 9px;
}

.transport {
  display: flex;
  align-items: flex-start;
  gap: 9px;
  padding-top: 5px;
}

.history {
  flex: 1;
  display: flex;
  height: 26px;
  margin-left: 17px;
  overflow: hidden;
}

.history li {
  position: relative;
  flex: none;
  width: 24px;
  padding-left: 4px;
}

/* rail and tick under every feature */
.history li::before,
.history li::after {
  content: "";
  position: absolute;
  left: 12px;
  bottom: 0;
  width: 24px;
  height: 2px;
  background: #cbcbcb;
}

.history li::after {
  width: 2px;
  height: 7px;
}

.history li:last-child::before {
  width: 15px;
  background: linear-gradient(90deg, #cbcbcb 6px, transparent 6px 8px, #cbcbcb 8px 12px, transparent 12px 13px, #cbcbcb 13px);
}

.timeline-gear {
  align-items: flex-start;
  padding-top: 5px;
}

/* Taskbar */
.taskbar {
  flex: none;
  display: flex;
  justify-content: space-between;
  height: 30px;
  background: #0d0d0d;
  color: #fff;
  font-family: "Open Sans", "Segoe UI", sans-serif;
}

.tasks {
  display: flex;
}

.tasks button {
  justify-content: center;
  width: 37px;
}

.open {
  background: linear-gradient(#76b9ed, #76b9ed) bottom / 28px 2px no-repeat;
}

.open.current {
  background: linear-gradient(#76b9ed, #76b9ed) bottom / 100% 2px no-repeat, #3c3c3c;
}

.tray {
  display: flex;
  align-items: center;
  gap: 8px;
  margin-right: 4px;
  border-right: 1px solid #666;
}

.people {
  margin-right: 6px;
}

.tray span {
  margin-left: 2px;
}

.time {
  margin-left: 7px;
}

.action {
  margin: 0 20px 0 14px;
}
```
